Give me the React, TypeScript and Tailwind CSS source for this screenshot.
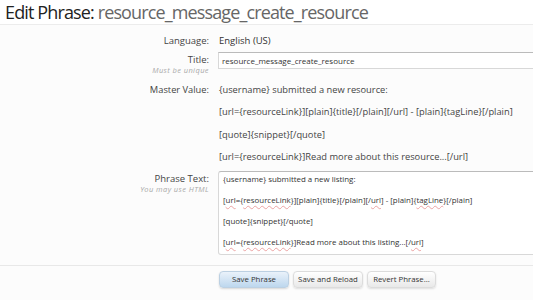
import React from "react";

const Squiggle = ({ children }: { children: React.ReactNode }) => (
  <span className="underline decoration-wavy decoration-[#eba3a3] decoration-[0.5px] underline-offset-[1.5px]">
    {children}
  </span>
);

const masterLines = [
  "{username} submitted a new resource:",
  "[url={resourceLink}][plain]{title}[/plain][/url] - [plain]{tagLine}[/plain]",
  "[quote]{snippet}[/quote]",
  "[url={resourceLink}]Read more about this resource...[/url]",
];

export default function App() {
  return (
    <div className="w-[533px] h-[300px] overflow-hidden bg-white font-['Open_Sans',sans-serif] text-[#333]">
      {/* Heading */}
      <div className="h-[25px] px-[5px] border-b border-[#ececec] flex items-center">
        <h1 className="text-[18px] leading-none whitespace-nowrap tracking-[-0.87px]">
          <span className="text-[#222]">Edit Phrase: </span>
          <span className="text-[#666]">resource_message_create_resource</span>
        </h1>
      </div>

      <div className="bg-[#fcfcfc] h-[275px]">
        {/* Language */}
        <div className="flex pt-[10px] text-[9.5px] leading-[12px]">
          <div className="w-[209px] shrink-0 text-right text-[#444]">Language:</div>
          <div className="pl-[10px]">English (US)</div>
        </div>

        {/* Title */}
        <div className="flex pt-[5px]">
          <div className="w-[209px] shrink-0 text-right pt-[2px]">
            <div className="text-[9.5px] leading-[12px] text-[#444]">Title:</div>
            <div className="text-[7.5px] leading-[9px] italic text-[#aaa] tracking-[0.4px]">Must be unique</div>
          </div>
          <div className="pl-[9px] flex-1">
            <div className="h-[17px] w-[330px] bg-white border border-[#d8d8d8] border-t-[#bbb] px-[3px] text-[8px] leading-[15px] whitespace-nowrap">
              resource_message_create_resource
            </div>
          </div>
        </div>

        {/* Master Value */}
        <div className="flex pt-[9px] text-[9.3px] leading-[12px]">
          <div className="w-[209px] shrink-0 text-right text-[#444]">Master Value:</div>
          <div className="pl-[10px] flex flex-col gap-[10.3px] whitespace-nowrap text-[#444]">
            {masterLines.map((l) => (
              <div key={l}>{l}</div>
            ))}
          </div>
        </div>

        {/* Phrase Text */}
        <div className="flex pt-[8px]">
          <div className="w-[209px] shrink-0 text-right pt-[2px]">
            <div className="text-[9.5px] leading-[12px] text-[#444]">Phrase Text:</div>
            <div className="text-[7.5px] leading-[9px] italic text-[#aaa] tracking-[0.4px]">You may use HTML</div>
          </div>
          <div className="pl-[9px] flex-1">
            <div className="h-[84px] w-[330px] bg-white border border-[#d8d8d8] border-t-[#bbb] rounded-l-[3px] pl-[4px] pt-[2px] text-[7.9px] leading-[11px] whitespace-nowrap text-[#333] flex flex-col gap-[10px]">
              <div>{"{username} submitted a new listing:"}</div>
              <div>
                [<Squiggle>url</Squiggle>={"{"}<Squiggle>resourceLink</Squiggle>{"}][plain]{title}[/plain][/"}
                <Squiggle>url</Squiggle>] - [plain]{"{"}<Squiggle>tagLine</Squiggle>{"}[/plain]"}
              </div>
              <div>{"[quote]{snippet}[/quote]"}</div>
              <div>
                [<Squiggle>url</Squiggle>={"{"}<Squiggle>resourceLink</Squiggle>{"}]Read more about this listing...[/"}
                <Squiggle>url</Squiggle>]
              </div>
            </div>
          </div>
        </div>

        {/* Buttons */}
        <div className="mt-[10px] border-t border-[#e8e8e8] pt-[5px] flex gap-[4px] pl-[219px]">
          <button className="h-[17px] w-[70px] rounded-[4px] border border-[#bcd0e2] bg-gradient-to-b from-[#eaf2fa] to-[#bdd7ee] text-[7.8px] text-[#333] shadow-[0_1px_2px_rgba(0,0,0,0.15)]">
            Save Phrase
          </button>
          <button className="h-[17px] w-[70px] rounded-[4px] border border-[#dcdcdc] bg-gradient-to-b from-white to-[#e9e9e9] text-[7.8px] text-[#333] shadow-[0_1px_2px_rgba(0,0,0,0.12)]">
            Save and Reload
          </button>
          <button className="h-[17px] w-[69px] rounded-[4px] border border-[#dcdcdc] bg-gradient-to-b from-white to-[#e9e9e9] text-[7.8px] text-[#333] shadow-[0_1px_2px_rgba(0,0,0,0.12)]">
            Revert Phrase...
          </button>
        </div>
      </div>
    </div>
  );
}
